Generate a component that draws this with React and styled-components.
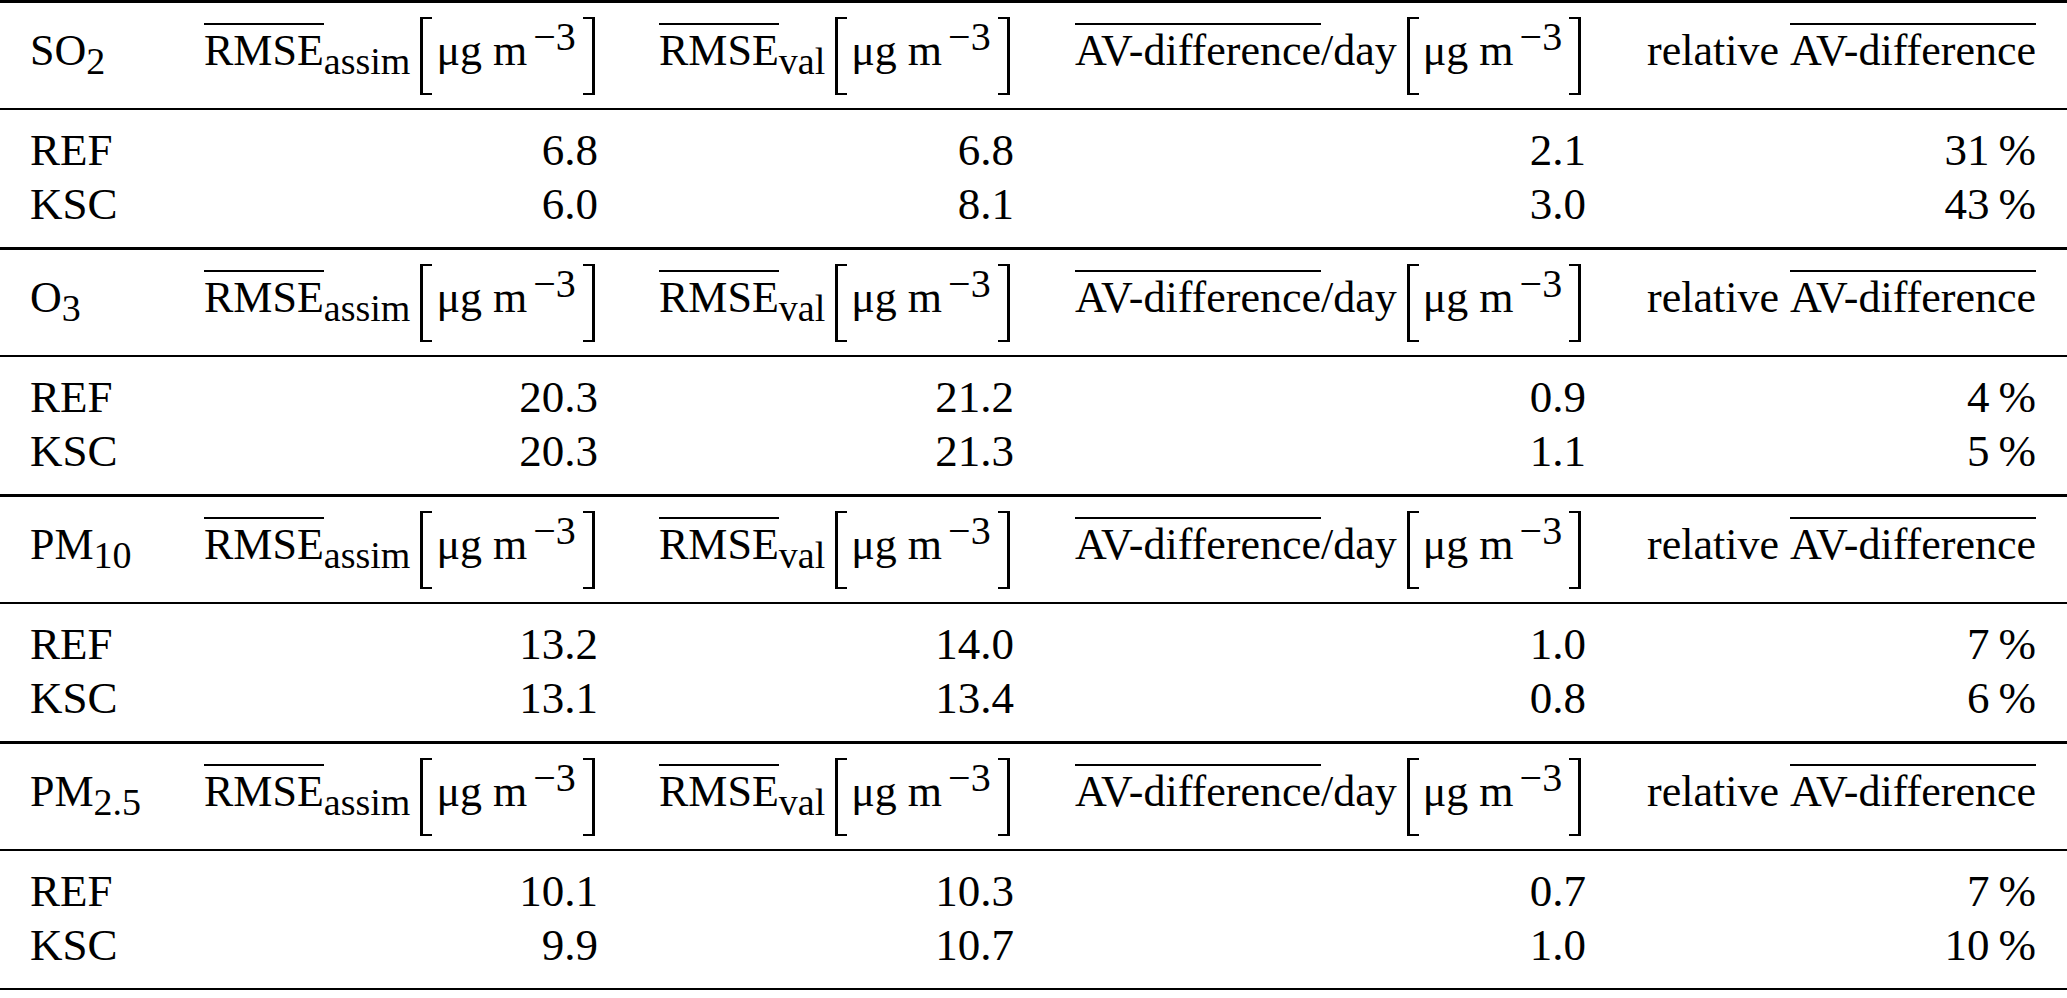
import React from "react"
import styled, { createGlobalStyle } from "styled-components"

const GlobalStyle = createGlobalStyle`
  html, body {
    margin: 0;
    padding: 0;
    background: #fff;
  }
  body {
    font-family: "Liberation Serif", "Times New Roman", serif;
    color: #000;
  }
`

const Table = styled.div`
  width: 2067px;
  border-bottom: 2px solid #000;
`

const Block = styled.section`
  border-top: 3px solid #000;
`

const Grid = styled.div`
  display: grid;
  grid-template-columns: 113px 394px 355px 511px 1fr;
  column-gap: 61px;
  padding: 0 31px 0 30px;
  align-items: baseline;
  font-size: 45px;
  line-height: 54px;
  white-space: nowrap;
`

const HeadRow = styled(Grid)`
  height: 107px;
  box-sizing: border-box;
  padding-top: 14px;
  font-size: 44px;
  border-bottom: 2px solid #000;
`

const Body = styled.div`
  height: 137px;
  box-sizing: border-box;
  padding-top: 13px;
`

const Label = styled.div`
  text-align: left;
`

const Head = styled.div`
  text-align: left;
`

const EndHead = styled.div`
  display: flex;
  align-items: baseline;
  justify-content: flex-end;
`

const Num = styled.div`
  text-align: right;
`

const Bar = styled.span`
  display: inline-block;
  line-height: 1;
  padding-top: 4px;
  border-top: 2px solid #000;
`

const Sub = styled.span`
  position: relative;
  top: 9px;
  font-size: 38px;
`

const Sup = styled.span`
  position: relative;
  top: -15px;
  margin-left: 6px;
  font-size: 40px;
`

const Gap = styled.span`
  display: inline-block;
  width: ${p => p.$w}px;
`

const Bracket = styled.span`
  display: inline-block;
  width: 12px;
  height: 78px;
  box-sizing: border-box;
  vertical-align: -30px;
  border: solid #000;
  border-width: ${p => (p.$side === "left" ? "2px 0 2px 3px" : "2px 3px 2px 0")};
  margin: ${p => (p.$side === "left" ? "0 4px 0 10px" : "0 0 0 7px")};
`

const Unit = () => (
  <>
    <Bracket $side="left" />
    μg<Gap $w={11} />m<Sup>−3</Sup>
    <Bracket $side="right" />
  </>
)

const blocks = [
  {
    species: ["SO", "2"],
    rows: [
      ["REF", "6.8", "6.8", "2.1", "31"],
      ["KSC", "6.0", "8.1", "3.0", "43"],
    ],
  },
  {
    species: ["O", "3"],
    rows: [
      ["REF", "20.3", "21.2", "0.9", "4"],
      ["KSC", "20.3", "21.3", "1.1", "5"],
    ],
  },
  {
    species: ["PM", "10"],
    rows: [
      ["REF", "13.2", "14.0", "1.0", "7"],
      ["KSC", "13.1", "13.4", "0.8", "6"],
    ],
  },
  {
    species: ["PM", "2.5"],
    rows: [
      ["REF", "10.1", "10.3", "0.7", "7"],
      ["KSC", "9.9", "10.7", "1.0", "10"],
    ],
  },
]

const Header = ({ species }) => (
  <HeadRow>
    <Label>
      {species[0]}
      <Sub>{species[1]}</Sub>
    </Label>
    <Head>
      <Bar>RMSE</Bar>
      <Sub>assim</Sub>
      <Unit />
    </Head>
    <Head>
      <Bar>RMSE</Bar>
      <Sub>val</Sub>
      <Unit />
    </Head>
    <Head>
      <Bar>AV-difference</Bar>/day
      <Unit />
    </Head>
    <EndHead>
      <span>relative</span>
      <Gap $w={11} />
      <Bar>AV-difference</Bar>
    </EndHead>
  </HeadRow>
)

const DataRow = ({ row }) => (
  <Grid>
    <Label>{row[0]}</Label>
    <Num>{row[1]}</Num>
    <Num>{row[2]}</Num>
    <Num>{row[3]}</Num>
    <Num>{row[4]}&#8201;%</Num>
  </Grid>
)

export default function App() {
  return (
    <>
      <GlobalStyle />
      <Table>
        {blocks.map(block => (
          <Block key={block.species.join("")}>
            <Header species={block.species} />
            <Body>
              {block.rows.map(row => (
                <DataRow key={row[0]} row={row} />
              ))}
            </Body>
          </Block>
        ))}
      </Table>
    </>
  )
}
